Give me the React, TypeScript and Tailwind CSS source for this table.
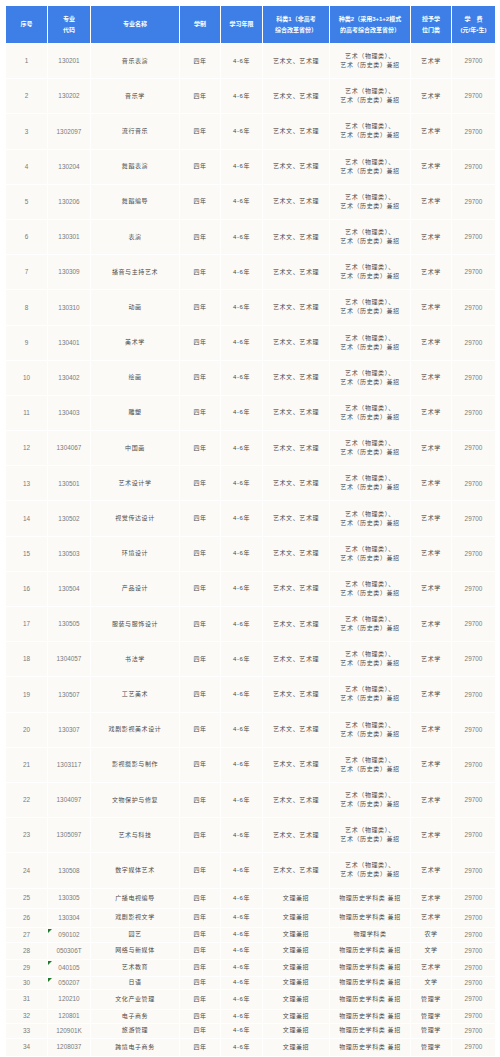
import React from "react";

const GRID =
  "grid grid-cols-[41px_42px_88px_40px_41px_66px_80px_40px_43px] gap-x-px";

const FONT = "font-['Liberation_Sans','Noto_Sans_CJK_SC',sans-serif]";

type Row = {
  no: number;
  code: string;
  name: string;
  kind1: string;
  kind2: string[];
  degree: string;
  mark?: boolean;
};

const ART1 = "艺术文、艺术理";
const ART2 = ["艺术（物理类）、", "艺术（历史类）兼招"];

const TALL: [string, string][] = [
  ["130201", "音乐表演"],
  ["130202", "音乐学"],
  ["1302097", "流行音乐"],
  ["130204", "舞蹈表演"],
  ["130206", "舞蹈编导"],
  ["130301", "表演"],
  ["130309", "播音与主持艺术"],
  ["130310", "动画"],
  ["130401", "美术学"],
  ["130402", "绘画"],
  ["130403", "雕塑"],
  ["1304067", "中国画"],
  ["130501", "艺术设计学"],
  ["130502", "视觉传达设计"],
  ["130503", "环境设计"],
  ["130504", "产品设计"],
  ["130505", "服装与服饰设计"],
  ["1304057", "书法学"],
  ["130507", "工艺美术"],
  ["130307", "戏剧影视美术设计"],
  ["1303117", "影视摄影与制作"],
  ["1304097", "文物保护与修复"],
  ["1305097", "艺术与科技"],
  ["130508", "数字媒体艺术"],
];

const BOTH = "物理历史学科类 兼招";

const SHORT: Row[] = [
  { no: 25, code: "130305", name: "广播电视编导", kind1: "文理兼招", kind2: [BOTH], degree: "艺术学" },
  { no: 26, code: "130304", name: "戏剧影视文学", kind1: "文理兼招", kind2: [BOTH], degree: "艺术学" },
  { no: 27, code: "090102", name: "园艺", kind1: "文理兼招", kind2: ["物理学科类"], degree: "农学", mark: true },
  { no: 28, code: "050306T", name: "网络与新媒体", kind1: "文理兼招", kind2: [BOTH], degree: "文学" },
  { no: 29, code: "040105", name: "艺术教育", kind1: "文理兼招", kind2: [BOTH], degree: "艺术学", mark: true },
  { no: 30, code: "050207", name: "日语", kind1: "文理兼招", kind2: [BOTH], degree: "文学", mark: true },
  { no: 31, code: "120210", name: "文化产业管理", kind1: "文理兼招", kind2: [BOTH], degree: "管理学" },
  { no: 32, code: "120801", name: "电子商务", kind1: "文理兼招", kind2: [BOTH], degree: "管理学" },
  { no: 33, code: "120901K", name: "旅游管理", kind1: "文理兼招", kind2: [BOTH], degree: "管理学" },
  { no: 34, code: "1208037", name: "跨境电子商务", kind1: "文理兼招", kind2: [BOTH], degree: "管理学" },
];

// row heights for the compact block at the bottom
const SHORT_H = [19, 18, 14, 16, 16, 12, 19, 13, 14, 17];

const HEADERS: string[][] = [
  ["序号"],
  ["专业", "代码"],
  ["专业名称"],
  ["学制"],
  ["学习年限"],
  ["科类1（非高考", "综合改革省份）"],
  ["种类2（采用3+1+2模式", "的高考综合改革省份）"],
  ["授予学", "位门类"],
  ["学　费", "(元/年•生)"],
];

function Cell({
  children,
  mark,
}: {
  children: React.ReactNode;
  mark?: boolean;
}) {
  return (
    <div className="relative flex flex-col items-center justify-center bg-[#fbfaf7] text-center">
      {mark && (
        <span className="absolute left-0 top-[1px] h-0 w-0 border-r-[4px] border-t-[4px] border-r-transparent border-t-[#1f7a2e]" />
      )}
      {children}
    </div>
  );
}

function BodyRow({ row, height }: { row: Row; height: number }) {
  const num = "text-[6.4px] text-[#7a7a7a]";
  const zh = "text-[6px] text-[#4a4a4a] tracking-[0.6px] leading-[9px]";
  return (
    <div className={`${GRID} mt-px`} style={{ height }}>
      <Cell>
        <span className={num}>{row.no}</span>
      </Cell>
      <Cell mark={row.mark}>
        <span className={num}>{row.code}</span>
      </Cell>
      <Cell>
        <span className={zh}>{row.name}</span>
      </Cell>
      <Cell>
        <span className={zh}>四年</span>
      </Cell>
      <Cell>
        <span className={zh}>4-6年</span>
      </Cell>
      <Cell>
        <span className={zh}>{row.kind1}</span>
      </Cell>
      <Cell>
        {row.kind2.map((t) => (
          <span key={t} className={zh}>
            {t}
          </span>
        ))}
      </Cell>
      <Cell>
        <span className={zh}>{row.degree}</span>
      </Cell>
      <Cell>
        <span className={num}>29700</span>
      </Cell>
    </div>
  );
}

export default function App() {
  const tall: Row[] = TALL.map(([code, name], i) => ({
    no: i + 1,
    code,
    name,
    kind1: ART1,
    kind2: ART2,
    degree: "艺术学",
  }));

  return (
    <div className={`w-[500px] h-[1057px] overflow-hidden bg-white pl-[6px] pt-[6px] ${FONT}`}>
      <div className={`${GRID} h-[37px]`}>
        {HEADERS.map((lines, i) => (
          <div
            key={i}
            className="flex flex-col items-center justify-center bg-[#3d7fe6] text-center text-[6px] font-bold leading-[11px] text-white"
          >
            {lines.map((l) => (
              <span key={l}>{l}</span>
            ))}
          </div>
        ))}
      </div>
      {tall.map((r) => (
        <BodyRow key={r.no} row={r} height={34.2} />
      ))}
      {SHORT.map((r, i) => (
        <BodyRow key={r.no} row={r} height={SHORT_H[i]} />
      ))}
    </div>
  );
}
